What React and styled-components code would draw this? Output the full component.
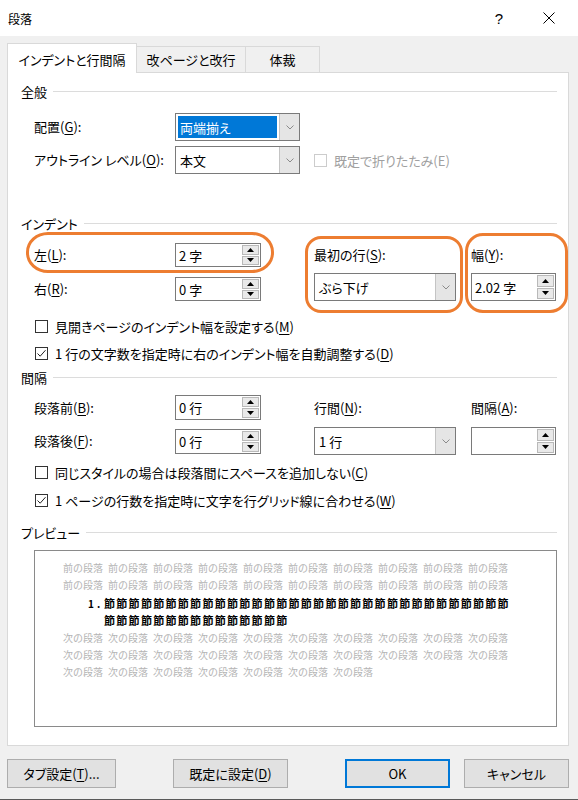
import React from 'react';
import styled, { createGlobalStyle } from 'styled-components';

const GlobalStyle = createGlobalStyle`
  body {
    margin: 0;
    font-family: "Noto Sans CJK JP", "Noto Sans", sans-serif;
    font-size: 13px;
    color: #000;
    font-feature-settings: "palt";
  }
  u { text-underline-offset: 2px; }
`;

const Window = styled.div`
  width: 578px;
  height: 800px;
  box-sizing: border-box;
  background: #f0f0f0;
  border-bottom: 1px solid #5a5a5a;
  display: flex;
  flex-direction: column;
`;

const TitleBar = styled.div`
  height: 36px;
  background: #fff;
  display: flex;
  align-items: center;
  padding: 0 4px 0 8px;
`;

const TitleText = styled.div`
  flex: 1;
  font-size: 12px;
`;

const TitleButton = styled.div`
  width: 50px;
  height: 36px;
  display: flex;
  align-items: center;
  justify-content: center;
  font-size: 15px;
  font-family: "Liberation Sans", sans-serif;
`;

const Body = styled.div`
  padding: 7px 9px 0 7px;
  display: flex;
  flex-direction: column;
`;

const TabRow = styled.div`
  display: flex;
  align-items: flex-end;
  height: 30px;
  margin-bottom: -1px;
  position: relative;
  z-index: 1;
`;

const Tab = styled.div`
  width: ${p => p.$w}px;
  height: ${p => (p.$active ? 30 : 26)}px;
  margin-bottom: ${p => (p.$active ? 0 : 1)}px;
  box-sizing: border-box;
  display: flex;
  align-items: center;
  justify-content: center;
  padding-top: ${p => (p.$active ? 2 : 0)}px;
  border: 1px solid #d9d9d9;
  border-bottom: none;
  background: ${p => (p.$active ? '#fff' : '#f0f0f0')};
  & + & { border-left: none; }
`;

const Panel = styled.div`
  height: 674px;
  box-sizing: border-box;
  background: #fff;
  border: 1px solid #d9d9d9;
  padding: 10px 11px 0 0;
  display: flex;
  flex-direction: column;
`;

const SectionHeader = styled.div`
  height: 16px;
  padding-left: 13px;
  margin-top: ${p => p.$mt || 0}px;
  display: flex;
  align-items: center;
  gap: 6px;
  &::after {
    content: '';
    flex: 1;
    height: 1px;
    background: #dcdcdc;
  }
`;

const Section = styled.div`
  position: relative;
  margin-top: ${p => p.$mt || 0}px;
`;

const FieldGrid = styled.div`
  display: grid;
  grid-template-columns: 141px 86px 53px 142px 15px 85px;
  grid-template-rows: ${p => p.$rows};
  row-gap: ${p => p.$gap}px;
  align-items: center;
  padding-left: 26px;
  margin-top: ${p => p.$mt}px;
`;

const Label = styled.div`
  grid-column: ${p => p.$col || 1};
  align-self: ${p => p.$align || 'center'};
  line-height: ${p => p.$lh || 16}px;
  white-space: nowrap;
`;

const SpinBox = styled.div`
  grid-column: ${p => p.$col || 2};
  align-self: ${p => p.$align || 'center'};
  width: ${p => p.$w || 86}px;
  height: ${p => p.$h || 24}px;
  box-sizing: border-box;
  border: 1px solid #7a7a7a;
  background: #fff;
  display: flex;
`;

const SpinValue = styled.div`
  flex: 1;
  display: flex;
  align-items: center;
  padding-left: 3px;
`;

const SpinButtons = styled.div`
  width: 17px;
  display: flex;
  flex-direction: column;
  gap: 1px;
  padding: 1px;
`;

const SpinButton = styled.div`
  flex: 1;
  background: #e9e9e9;
  border: 1px solid #b9b9b9;
  display: flex;
  align-items: center;
  justify-content: center;
`;

const Combo = styled.div`
  grid-column: ${p => p.$col || 2} / span ${p => p.$span || 1};
  width: ${p => p.$w}px;
  height: 28px;
  box-sizing: border-box;
  border: 1px solid #7a7a7a;
  background: #fff;
  display: flex;
`;

const ComboValue = styled.div`
  flex: 1;
  padding: 2px;
  display: flex;
`;

const ComboText = styled.div`
  flex: 1;
  display: flex;
  align-items: center;
  padding-left: 2px;
  background: ${p => (p.$selected ? '#0078d7' : 'transparent')};
  color: ${p => (p.$selected ? '#fff' : '#000')};
`;

const ComboButton = styled.div`
  width: 19px;
  background: #e5e5e5;
  border-left: 1px solid #c4c4c4;
  display: flex;
  align-items: center;
  justify-content: center;
`;

const CheckRow = styled.label`
  grid-column: ${p => p.$col || 'auto'};
  display: flex;
  align-items: center;
  gap: 7px;
  height: 16px;
  padding-left: ${p => (p.$inset ? 27 : 0)}px;
  margin-top: ${p => p.$mt || 0}px;
  white-space: nowrap;
  color: ${p => (p.$disabled ? '#a0a0a0' : '#000')};
`;

const CheckBox = styled.span`
  width: 13px;
  height: 13px;
  box-sizing: border-box;
  border: 1px solid ${p => (p.$disabled ? '#cccccc' : '#333')};
  background: #fff;
  display: flex;
  align-items: center;
  justify-content: center;
`;

const Annotation = styled.div`
  position: absolute;
  left: ${p => p.$x}px;
  top: ${p => p.$y}px;
  width: ${p => p.$w}px;
  height: ${p => p.$h}px;
  box-sizing: border-box;
  border: 3px solid #ed7d31;
  border-radius: ${p => p.$r};
  pointer-events: none;
`;

const PreviewBox = styled.div`
  margin: 10px 0 0 26px;
  width: 523px;
  height: 177px;
  box-sizing: border-box;
  border: 1px solid #8a8a8a;
  padding: 8px 0 0 28px;
`;

const GrayLine = styled.div`
  display: flex;
  gap: 5px;
  height: 17px;
  line-height: 17px;
  align-items: center;
  font-size: 10px;
  color: #b4b4b4;
  font-feature-settings: normal;
  white-space: nowrap;
`;

const MainPara = styled.div`
  display: grid;
  grid-template-columns: 16px auto;
  grid-auto-rows: 17px;
  line-height: 17px;
  margin: 2px 0 0 25px;
  font-size: 11px;
  font-weight: 700;
  letter-spacing: 1.3px;
  font-feature-settings: normal;
  white-space: nowrap;
`;

const ListNumber = styled.span`
  font-size: 10px;
  letter-spacing: 3px;
`;

const Footer = styled.div`
  display: flex;
  gap: 57px;
  padding-top: 13px;
`;

const ButtonGroup = styled.div`
  display: flex;
  gap: 14px;
`;

const Button = styled.div`
  width: ${p => p.$w}px;
  height: 29px;
  box-sizing: border-box;
  background: #e1e1e1;
  border: 1px solid ${p => (p.$default ? '#0078d7' : '#adadad')};
  box-shadow: ${p => (p.$default ? 'inset 0 0 0 1px #0078d7' : 'none')};
  display: flex;
  align-items: center;
  justify-content: center;
`;

const Chevron = () => (
  <svg width="8" height="5" viewBox="0 0 8 5">
    <path d="M0.5 0.5 L4 4 L7.5 0.5" fill="none" stroke="#8a8a8a" strokeWidth="1" />
  </svg>
);

const Arrow = ({ down }) => (
  <svg width="7" height="4" viewBox="0 0 7 4">
    <path d={down ? 'M0 0 L7 0 L3.5 4Z' : 'M0 4 L7 4 L3.5 0Z'} fill="#000" />
  </svg>
);

const Spin = ({ value, ...rest }) => (
  <SpinBox {...rest}>
    <SpinValue>{value}</SpinValue>
    <SpinButtons>
      <SpinButton><Arrow /></SpinButton>
      <SpinButton><Arrow down /></SpinButton>
    </SpinButtons>
  </SpinBox>
);

const Select = ({ value, selected, ...rest }) => (
  <Combo {...rest}>
    <ComboValue>
      <ComboText $selected={selected}>{value}</ComboText>
    </ComboValue>
    <ComboButton><Chevron /></ComboButton>
  </Combo>
);

const Check = ({ checked, disabled, children, ...rest }) => (
  <CheckRow $disabled={disabled} {...rest}>
    <CheckBox $disabled={disabled}>
      {checked && (
        <svg width="11" height="11" viewBox="0 0 11 11">
          <path d="M1.5 5.5 L4.2 8.2 L9.5 2.2" fill="none" stroke="#222" strokeWidth="1" />
        </svg>
      )}
    </CheckBox>
    <span>{children}</span>
  </CheckRow>
);

const repeat = (text, n) => Array.from({ length: n }, (_, i) => <span key={i}>{text}</span>);

const App = () => {
  return (
    <>
      <GlobalStyle />
      <Window>
        <TitleBar>
          <TitleText>段落</TitleText>
          <TitleButton>?</TitleButton>
          <TitleButton>
            <svg width="12" height="12" viewBox="0 0 12 12">
              <path d="M0.5 0.5 L11.5 11.5 M11.5 0.5 L0.5 11.5" stroke="#000" strokeWidth="1" />
            </svg>
          </TitleButton>
        </TitleBar>

        <Body>
          <TabRow>
            <Tab $active $w={130}>インデントと行間隔</Tab>
            <Tab $w={109}>改ページと改行</Tab>
            <Tab $w={74}>体裁</Tab>
          </TabRow>

          <Panel>
            {/* 全般 */}
            <SectionHeader>全般</SectionHeader>
            <FieldGrid $rows="28px 28px" $gap={5} $mt={14}>
              <Label>配置(<u>G</u>):</Label>
              <Select $col={2} $span={2} $w={125} value="両端揃え" selected />
              <Label>アウトライン レベル(<u>O</u>):</Label>
              <Select $col={2} $span={2} $w={125} value="本文" />
              <Check $col={4} disabled>既定で折りたたみ(E)</Check>
            </FieldGrid>

            {/* インデント */}
            <Section $mt={41}>
              <SectionHeader>インデント</SectionHeader>
              <FieldGrid $rows="24px 28px" $gap={6} $mt={12}>
                <Label>左(<u>L</u>):</Label>
                <Spin value="2 字" />
                <Label $col={4}>最初の行(<u>S</u>):</Label>
                <Label $col={6}>幅(<u>Y</u>):</Label>
                <Label $align="end" $lh={24}>右(<u>R</u>):</Label>
                <Spin value="0 字" $align="end" />
                <Select $col={4} $w={142} value="ぶら下げ" />
                <Spin $col={6} $w={85} $h={28} value="2.02 字" />
              </FieldGrid>
              <Annotation $x={18} $y={17} $w={248} $h={41} $r="22px / 20px" />
              <Annotation $x={297} $y={21} $w={158} $h={77} $r="16px" />
              <Annotation $x={457} $y={18} $w={103} $h={80} $r="18px" />
            </Section>
            <Check $inset $mt={17}>見開きページのインデント幅を設定する(<u>M</u>)</Check>
            <Check $inset $mt={11} checked>1 行の文字数を指定時に右のインデント幅を自動調整する(<u>D</u>)</Check>

            {/* 間隔 */}
            <SectionHeader $mt={8}>間隔</SectionHeader>
            <FieldGrid $rows="25px 28px" $gap={7} $mt={10}>
              <Label>段落前(<u>B</u>):</Label>
              <Spin value="0 行" $h={25} />
              <Label $col={4}>行間(<u>N</u>):</Label>
              <Label $col={6}>間隔(<u>A</u>):</Label>
              <Label>段落後(<u>F</u>):</Label>
              <Spin value="0 行" $h={25} />
              <Select $col={4} $w={142} value="1 行" />
              <Spin $col={6} $w={85} $h={28} value="" />
            </FieldGrid>
            <Check $inset $mt={9}>同じスタイルの場合は段落間にスペースを追加しない(<u>C</u>)</Check>
            <Check $inset $mt={12} checked>1 ページの行数を指定時に文字を行グリッド線に合わせる(<u>W</u>)</Check>

            {/* プレビュー */}
            <SectionHeader $mt={16}>プレビュー</SectionHeader>
            <PreviewBox>
              <GrayLine>{repeat('前の段落', 10)}</GrayLine>
              <GrayLine>{repeat('前の段落', 10)}</GrayLine>
              <MainPara>
                <ListNumber>1.</ListNumber>
                <span>{'節'.repeat(33)}</span>
                <span />
                <span>{'節'.repeat(15)}</span>
              </MainPara>
              <GrayLine>{repeat('次の段落', 10)}</GrayLine>
              <GrayLine>{repeat('次の段落', 10)}</GrayLine>
              <GrayLine>{repeat('次の段落', 7)}</GrayLine>
            </PreviewBox>
          </Panel>

          <Footer>
            <Button $w={109}>タブ設定(<u>T</u>)...</Button>
            <Button $w={115}>既定に設定(<u>D</u>)</Button>
            <ButtonGroup>
              <Button $w={105} $default>OK</Button>
              <Button $w={105}>キャンセル</Button>
            </ButtonGroup>
          </Footer>
        </Body>
      </Window>
    </>
  );
};

export default App;
